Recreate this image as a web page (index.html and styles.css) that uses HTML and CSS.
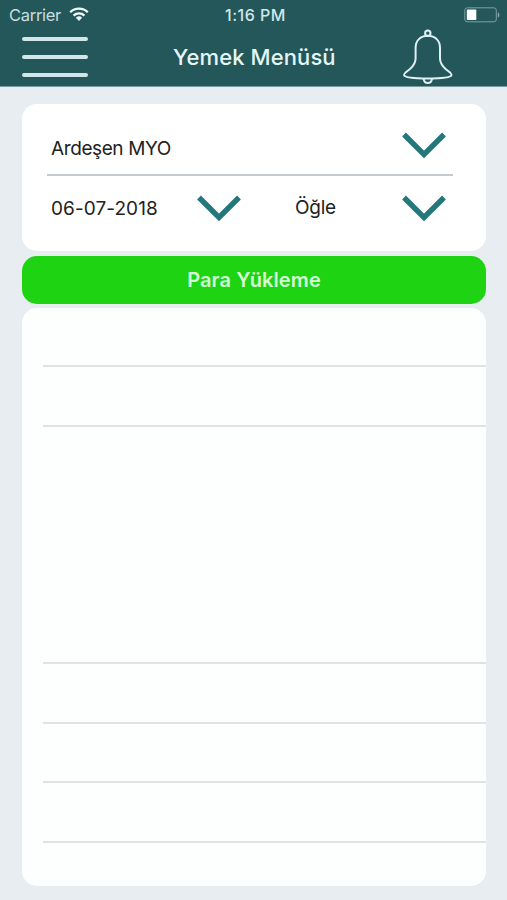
FILE: index.html
```html
<!DOCTYPE html>
<html lang="tr">
<head>
<meta charset="utf-8">
<title>Yemek Menüsü</title>
<link rel="stylesheet" href="styles.css">
</head>
<body>
<header class="header">
  <div class="status">
    <div class="carrier">
      <span class="carrier-name">Carrier</span>
      <svg class="wifi" width="20" height="14" viewBox="0 0 20 14" fill="none" stroke="currentColor" stroke-width="2.3">
        <path d="M1.2 5.2a12.600 12.600 0 0 1 17.600 0"/>
        <path d="M4.600 8.600a7.800 7.800 0 0 1 10.800 0"/>
        <path d="M6.900 10.800a4.500 4.500 0 0 1 6.200 0L10 14z" fill="currentColor" stroke="none"/>
      </svg>
    </div>
    <span class="time">1:16 PM</span>
    <svg class="battery" width="36" height="16" viewBox="0 0 36 16">
      <rect x=".8" y=".8" width="31.5" height="14" rx="2.5" fill="none" stroke="#7fa0a2" stroke-width="1"/>
      <rect x="2.8" y="2.6" width="9.5" height="10.4" rx=".8" fill="#fff"/>
      <path d="M33.8 5.2c2 .8 2 4.600 0 5.400z" fill="#8dabad"/>
    </svg>
  </div>
  <nav class="nav">
    <button class="menu" aria-label="Menü"><i></i><i></i><i></i></button>
    <h1 class="title">Yemek Menüsü</h1>
    <button class="bell" aria-label="Bildirimler">
      <svg width="52" height="56" viewBox="0 0 52 56" fill="none" stroke="#def0f3" stroke-width="2">
        <circle cx="25.8" cy="4.2" r="2.7"/>
        <path d="M25.8 6.800c-7.500 0-12.200 4.800-12.200 12v10.700c0 5-2.200 7.500-5.600 10.500C4.700 42.500 1.500 44.400 2.100 46.200c.9 2.400 12.500 3.400 23.700 3.400s22.800-1 23.700-3.400c.6-1.800-2.600-3.700-5.900-6.200-3.400-3-5.600-5.500-5.600-10.500V18.800c0-7.200-4.700-12-12.200-12z"/>
        <path d="M21.700 49.800c.5 5.500 7.700 5.500 8.200 0"/>
      </svg>
    </button>
  </nav>
</header>
<main class="content">
  <section class="filters">
    <div class="row row-place">
      <span class="label place">Ardeşen MYO</span>
      <svg class="chev" width="46" height="32" viewBox="0 0 46 32"><path d="M3 4.500 23 24.500 43 4.500"/></svg>
    </div>
    <div class="row row-date">
      <span class="label date">06-07-2018</span>
      <svg class="chev" width="46" height="32" viewBox="0 0 46 32"><path d="M3 4.500 23 24.500 43 4.500"/></svg>
      <span class="label meal">Öğle</span>
      <svg class="chev" width="46" height="32" viewBox="0 0 46 32"><path d="M3 4.500 23 24.500 43 4.500"/></svg>
    </div>
  </section>
  <button class="load"><span>Para Yükleme</span></button>
  <ul class="list">
    <li></li><li></li><li class="tall"></li><li></li><li></li><li></li><li></li>
  </ul>
</main>
</body>
</html>
```
FILE: styles.css
```css
* { box-sizing: border-box; }
body {
  margin: 0;
  width: 507px;
  height: 900px;
  overflow: hidden;
  background: #e8edf1;
  font-family: Inter, "Liberation Sans", sans-serif;
}
button { border: 0; padding: 0; background: none; font-family: inherit; }
svg { display: block; flex: none; }
.header {
  height: 87px;
  background: #245759;
  border-bottom: 1px solid #7c9c9f;
  color: #def0f3;
}
.status {
  display: grid;
  grid-template-columns: 1fr auto 1fr;
  align-items: center;
  height: 29px;
  padding: 0 7px 0 9px;
}
.carrier { display: flex; align-items: center; gap: 8px; }
.carrier-name { font-size: 16.500px; letter-spacing: -0.300px; line-height: 20px; width: 52px; white-space: nowrap; color: #c5dfe1; }
.wifi { margin-top: -1px; color: #effcff; }
.time { padding-left: 2px; font-size: 16px; font-weight: 500; letter-spacing: 0.500px; line-height: 20px; color: #d2e7e9; }
.battery { justify-self: end; }
.nav {
  display: grid;
  grid-template-columns: 151px 1fr 52px;
  height: 57px;
  padding: 0 53px 0 22px;
}
.menu { display: flex; flex-direction: column; gap: 14px; width: 66px; padding-top: 8px; }
.menu i { height: 4px; border-radius: 2px; background: #d2e5e8; }
.title { margin: 0; font-size: 22px; font-weight: 500; letter-spacing: 0.100px; line-height: 57px; color: #e4f5f8; white-space: nowrap; }
.bell { margin-top: -1px; }
.content { padding: 17px 21px 0 22px; }
.filters {
  height: 147px;
  padding: 17px 33px 0 25px;
  border-radius: 15px;
  background: #fff;
}
.row { display: flex; align-items: center; padding-left: 4px; }
.row-place { height: 55px; justify-content: space-between; border-bottom: 2px solid #c4c9d4; padding-right: 6px; }
.row-place .chev { margin-top: -4px; }
.row-date { display: grid; grid-template-columns: 145px 99px 106px 46px; height: 65px; }
.label { font-size: 19px; line-height: 24px; color: #222; white-space: nowrap; }
.place { letter-spacing: -0.400px; padding-top: 2px; }
.date { letter-spacing: 0.080px; }
.meal { letter-spacing: -0.250px; padding-bottom: 2px; }
.chev { fill: none; stroke: #24787c; stroke-width: 5.400; }
.load {
  display: flex;
  align-items: center;
  justify-content: center;
  width: 100%;
  height: 48px;
  margin: 5px 0 4px;
  border-radius: 15px;
  background: #1dd312;
  color: #d5fbd3;
  font-size: 20px;
  font-weight: 600;
  letter-spacing: 0.100px;
}
.list {
  height: 578px;
  margin: 0;
  padding: 0 0 0 21px;
  border-radius: 15px;
  background: #fdfefe;
  list-style: none;
}
.list li { height: 59.400px; border-bottom: 2px solid #e0e2e4; }
.list .tall { height: 237.700px; }
.list li:last-child { border: 0; height: 44px; }
```
